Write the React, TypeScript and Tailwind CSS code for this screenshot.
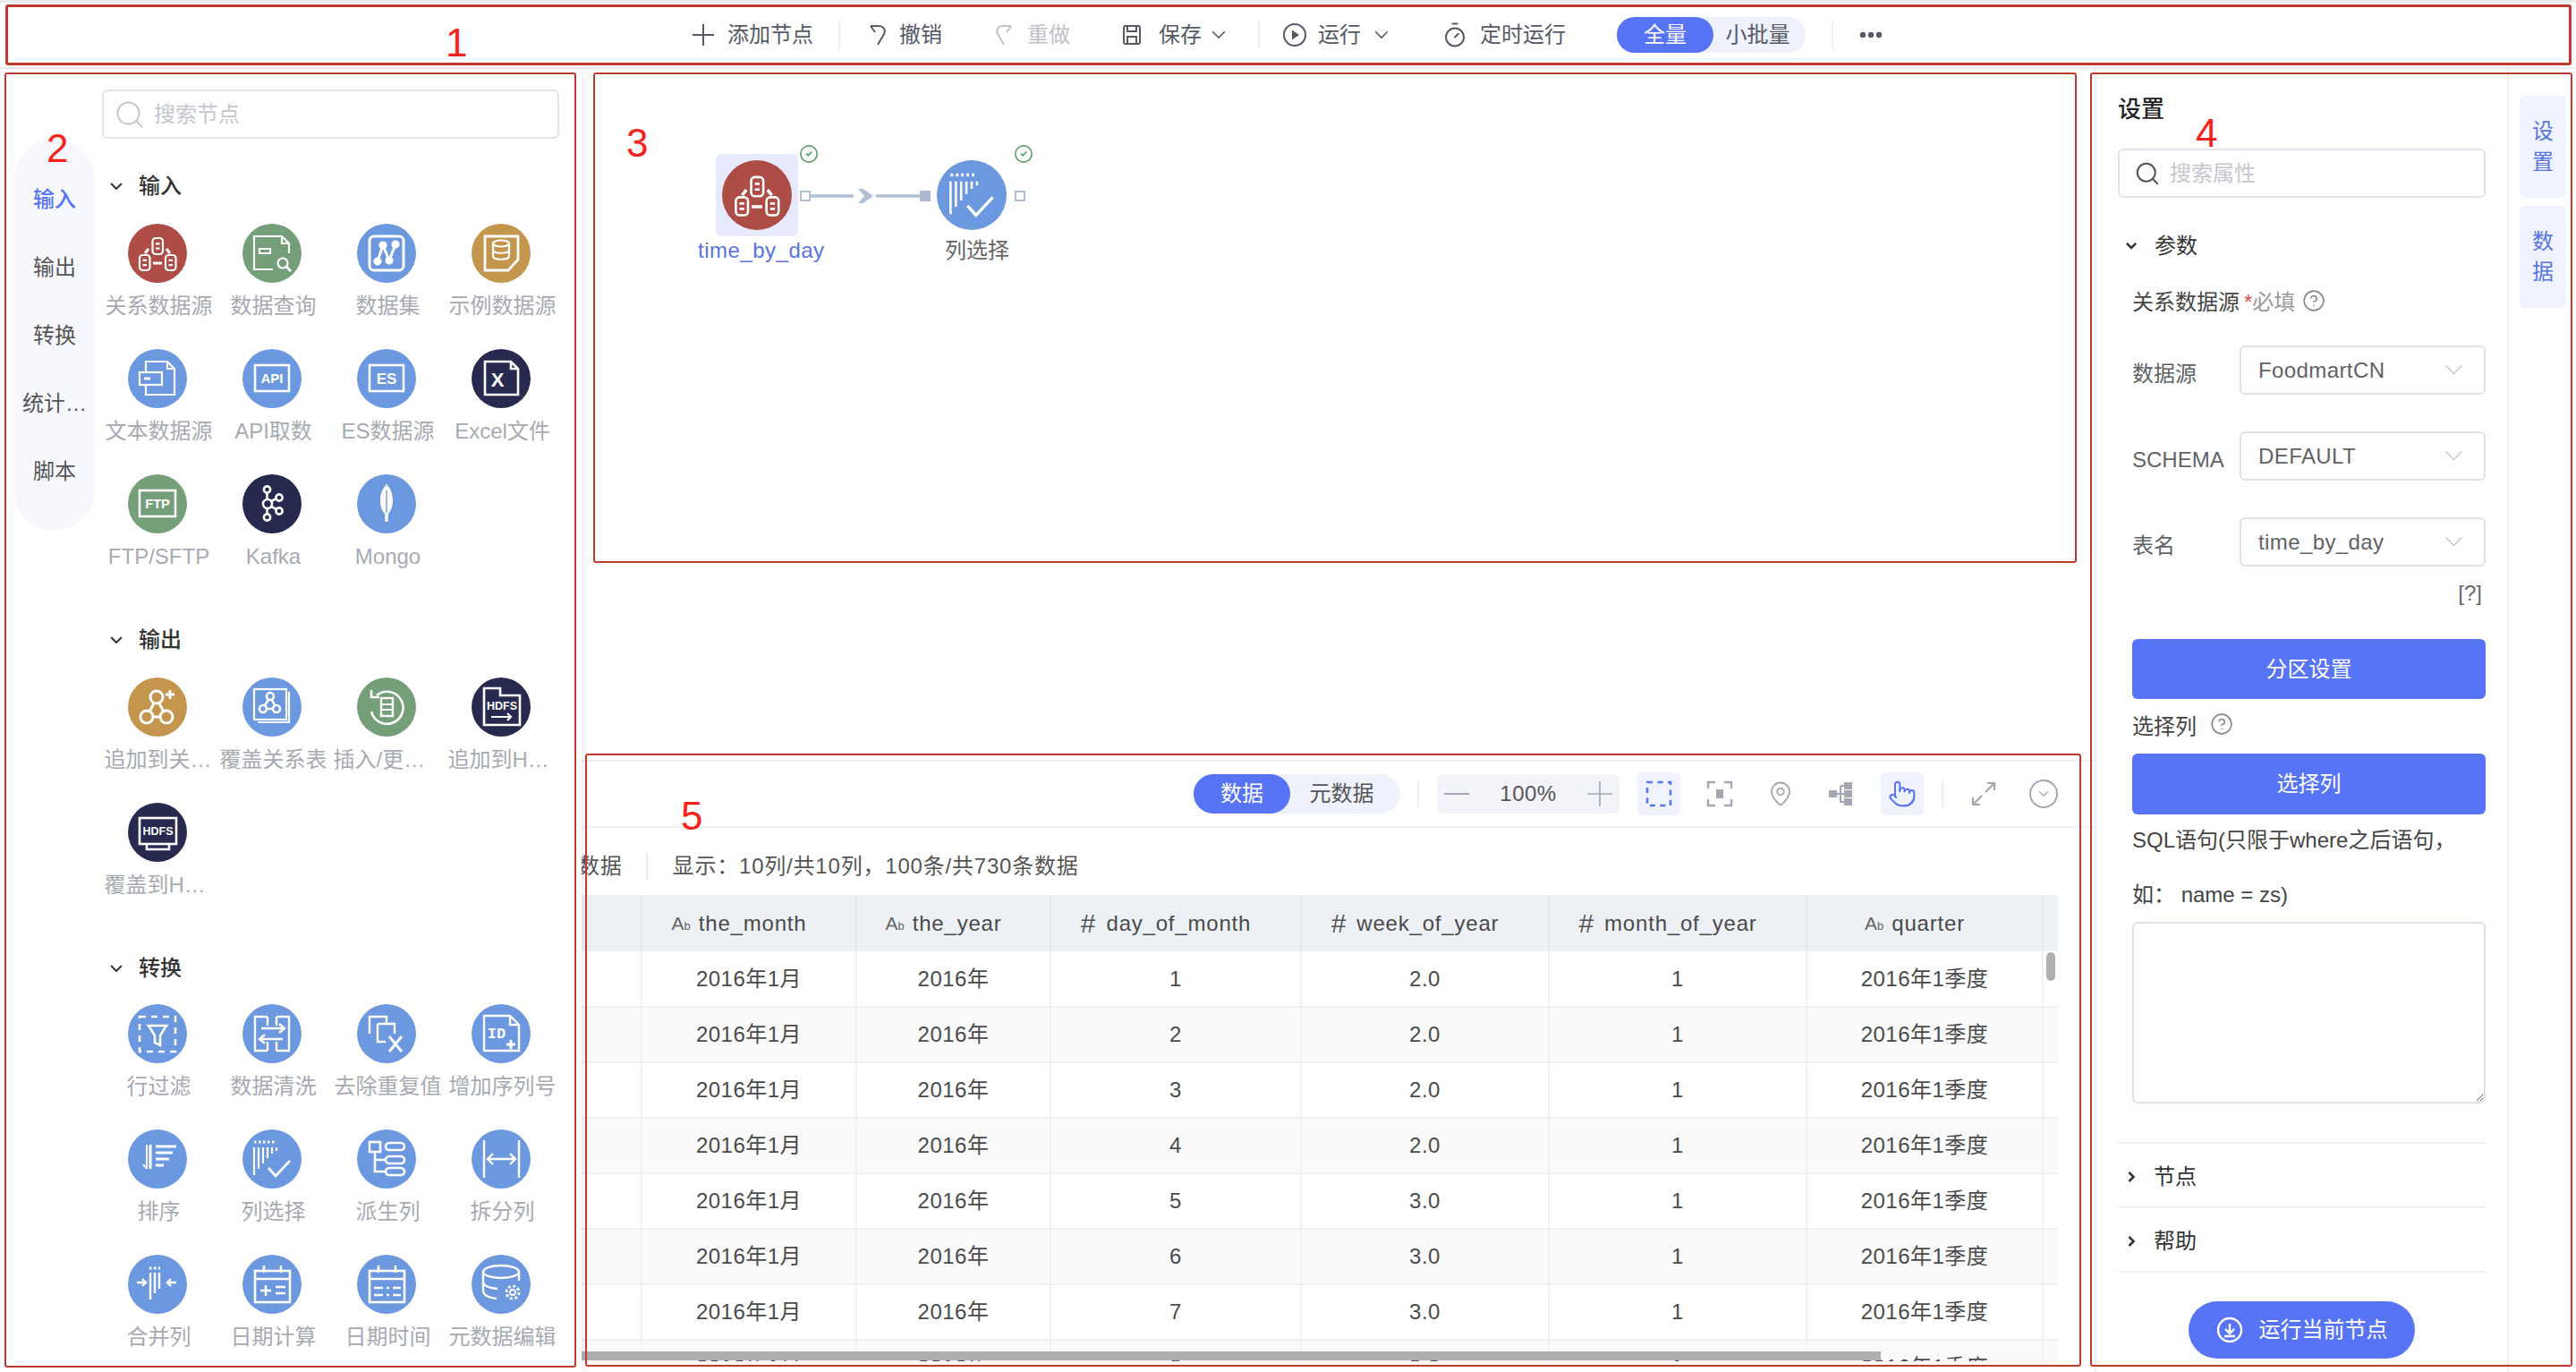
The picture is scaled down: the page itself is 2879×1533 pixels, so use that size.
import React from "react";
import { ChevronDown, Timer, Search, MapPin, Pointer, CircleHelp, CircleCheck } from "lucide-react";

const RED = "#ae4c46";
const GREEN = "#749f78";
const BLUE = "#6b98de";
const GOLD = "#c4954d";
const NAVY = "#27294f";

const Cyl = ({ x, y, w, h }: { x: number; y: number; w: number; h: number }) => (
  <g>
    <rect x={x} y={y} width={w} height={h} rx={3.5} />
    <path d={`M${x + 3.5} ${y + h * 0.35}h${w - 7}M${x + 3.5} ${y + h * 0.65}h${w - 7}`} />
  </g>
);

const Txt = ({ x, y, size, children, font }: { x: number; y: number; size: number; children: string; font?: string }) => (
  <text x={x} y={y} fontSize={size} fontWeight={700} fill="white" stroke="none" textAnchor="middle" fontFamily={font || "Liberation Sans"}>
    {children}
  </text>
);

const glyphs: Record<string, React.ReactNode> = {
  rdb: (
    <>
      <Cyl x={27.5} y={16} w={11.5} h={18} />
      <Cyl x={13} y={35} w={11.5} h={17} />
      <Cyl x={42} y={35} w={11.5} h={17} />
      <path d="M28 44h10M19 33l4-5M47 33l-4-5" strokeWidth={3} />
    </>
  ),
  query: (
    <>
      <path d="M52 33V22l-8-8H13v37h21M44 14v8h8" />
      <path d="M19 28h12v5H19z" />
      <circle cx={45} cy={44} r={5.5} />
      <path d="M49 48l5 5" strokeWidth={3} />
    </>
  ),
  dataset: (
    <>
      <rect x={14} y={14} width={38} height={38} rx={5} strokeWidth={3} />
      <path d="M23 42l6-18 7 17 7-18" strokeWidth={3} />
      <g fill="white">
        <circle cx={23} cy={42} r={3.5} />
        <circle cx={29} cy={24} r={3.5} />
        <circle cx={36} cy={41} r={3.5} />
        <circle cx={43} cy={23} r={3.5} />
      </g>
    </>
  ),
  sample: (
    <>
      <path d="M15 14h37v26L41 52H15z" strokeWidth={2.8} />
      <ellipse cx={33} cy={22} rx={9} ry={3.5} />
      <path d="M24 22v14c0 5 18 5 18 0V22M24 29c0 5 18 5 18 0" />
    </>
  ),
  text: (
    <>
      <path d="M20 25V14h24l8 8v29H20V41M44 14v8h8" />
      <rect x={13} y={26} width={25} height={14} />
      <path d="M18 33h7" strokeWidth={3} />
    </>
  ),
  api: (
    <>
      <rect x={14} y={18} width={38} height={29} strokeWidth={2.6} />
      <Txt x={33} y={38} size={15}>API</Txt>
    </>
  ),
  es: (
    <>
      <rect x={14} y={18} width={38} height={29} strokeWidth={2.6} />
      <Txt x={33} y={39} size={17}>ES</Txt>
    </>
  ),
  excel: (
    <>
      <path d="M15 14h29l8 8v29H15zM44 14v8h8" strokeWidth={2.6} />
      <Txt x={29} y={42} size={22}>X</Txt>
    </>
  ),
  ftp: (
    <>
      <rect x={13} y={18} width={40} height={29} strokeWidth={2.6} />
      <Txt x={33} y={38} size={14.5}>FTP</Txt>
    </>
  ),
  kafka: (
    <g strokeWidth={2.6}>
      <circle cx={27.5} cy={17} r={3.6} />
      <circle cx={28} cy={33} r={5} />
      <circle cx={27.5} cy={48} r={3.6} />
      <circle cx={41} cy={26} r={3.6} />
      <circle cx={41} cy={41} r={3.6} />
      <path d="M27.5 21v7M27.5 38v6M32 30l6-3M32 36l6 3" />
    </g>
  ),
  mongo: (
    <>
      <path d="M33 11C24 20 24 36 31 44l.5 9h3l.5-9C42 36 42 20 33 11z" fill="white" stroke="none" />
      <path d="M33 18v25" stroke={BLUE} strokeWidth={1.4} />
    </>
  ),
  addRel: (
    <g strokeWidth={3}>
      <circle cx={32} cy={22} r={7} />
      <circle cx={21} cy={44} r={7} />
      <circle cx={43} cy={44} r={7} />
      <path d="M29 29l-5 9M35 29l5 9M28 44h8M47 14v10M42 19h10" />
    </g>
  ),
  overwrite: (
    <>
      <rect x={13} y={13} width={36} height={34} />
      <path d="M52 16v34H17" />
      <g strokeWidth={2.6}>
        <circle cx={31} cy={21} r={4} />
        <circle cx={23} cy={35} r={4} />
        <circle cx={38} cy={35} r={4} />
        <path d="M29 25l-4 6M33 25l3 6M27 35h7" />
      </g>
    </>
  ),
  insert: (
    <>
      <path d="M22 20A18 18 0 1 1 16 38" strokeWidth={2.6} />
      <path d="M16 14v8h9" strokeWidth={2.6} />
      <rect x={27} y={23} width={13} height={20} strokeWidth={2.4} />
      <path d="M27 30h13M27 36h13" />
    </>
  ),
  hdfsArrow: (
    <>
      <path d="M14 53V12h18v8h22v33z" strokeWidth={2.6} />
      <Txt x={34} y={36} size={12.5}>HDFS</Txt>
      <path d="M22 44h22M40 40l4 4-4 4" />
    </>
  ),
  hdfsScreen: (
    <>
      <rect x={13} y={17} width={41} height={29} strokeWidth={2.6} />
      <path d="M21 46v6h25v-6" strokeWidth={2.6} />
      <Txt x={33.5} y={36} size={12.5}>HDFS</Txt>
    </>
  ),
  filter: (
    <>
      <rect x={13} y={14} width={40} height={39} strokeWidth={2.6} strokeDasharray="7 6" />
      <path d="M23 24h20l-7 11v11l-6-3v-8z" strokeWidth={2.6} />
    </>
  ),
  clean: (
    <>
      <path d="M28 14H14v38h14M38 14h14v38H38M28 14v10M38 14v10M28 42v10M38 42v10" strokeWidth={2.4} />
      <path d="M21 27h26M41 22l6 5-6 5M45 39H19M25 34l-6 5 6 5" strokeWidth={2.4} />
    </>
  ),
  dedupe: (
    <>
      <path d="M14 33V14h19v8M23 22h19v11M23 22v20h9" strokeWidth={2.4} />
      <path d="M36 36l14 17M50 36L36 53" strokeWidth={3} />
    </>
  ),
  id: (
    <>
      <path d="M14 13h29l10 10v29H14zM43 13v10h10" strokeWidth={2.4} />
      <Txt x={28} y={38} size={17} font="Liberation Mono">ID</Txt>
      <path d="M44 40v10M39 45h10" strokeWidth={3} />
    </>
  ),
  sort: (
    <g strokeWidth={3}>
      <path d="M25 17v27M31 19h23M31 26h19M31 33h15M31 40h9" />
      <path d="M21 17v27M21 44l-4-5" strokeWidth={2} />
    </g>
  ),
  columns: (
    <>
      <path d="M13 14h25" strokeDasharray="2.5 2.5" strokeWidth={3} />
      <path d="M13 20v31M18 20v24M23 20v18M28 20v12M33 20v7M38 20v4" strokeWidth={2.2} />
      <path d="M29 43l8 9 16-17" strokeWidth={2.8} />
    </>
  ),
  derive: (
    <>
      <rect x={14} y={14} width={12} height={11} strokeWidth={2.6} />
      <rect x={32} y={15} width={21} height={8} rx={4} strokeWidth={2.6} />
      <rect x={32} y={30} width={21} height={8} rx={4} strokeWidth={2.6} />
      <rect x={32} y={43} width={21} height={8} rx={4} strokeWidth={2.6} />
      <path d="M20 25v22h12M20 34h12" strokeWidth={2.6} />
    </>
  ),
  split: <path d="M14 12v42M53 12v42M19 33h29M24 27l-6 6 6 6M43 27l6 6-6 6" strokeWidth={2.4} />,
  merge: (
    <>
      <path d="M25 20v30M30 20v23M35 20v18" strokeWidth={2.4} />
      <path d="M24 15h12" strokeDasharray="2.5 2.5" strokeWidth={3} />
      <path d="M10 31h10M16 27l4 4-4 4" strokeWidth={2.4} />
      <path d="M54 31H44M48 27l-4 4 4 4" strokeWidth={2.4} />
    </>
  ),
  dateCalc: (
    <g strokeWidth={2.6}>
      <rect x={14} y={18} width={39} height={35} />
      <path d="M14 27h39M24 12v8M43 12v8M20 40h12M26 34v12M37 36h11M37 43h11" />
    </g>
  ),
  dateTime: (
    <g strokeWidth={2.6}>
      <rect x={14} y={18} width={39} height={35} />
      <path d="M14 27h39M24 12v8M43 12v8M19 37h10M33 37h3M40 37h9M19 45h10M33 45h3M40 45h9" />
    </g>
  ),
  meta: (
    <g strokeWidth={2.4}>
      <ellipse cx={33} cy={19} rx={20} ry={7} />
      <path d="M13 19v11c0 4 6 7 16 8M53 19v10M13 30v10c0 5 7 8 15 9" />
      <circle cx={46} cy={42} r={3} strokeWidth={1.8} />
      <circle cx={46} cy={42} r={7} strokeWidth={3} strokeDasharray="3 2.5" />
    </g>
  ),
};

const NodeIcon = ({ color, glyph, size = 66 }: { color: string; glyph: string; size?: number }) => (
  <svg width={size} height={size} viewBox="0 0 66 66" className="shrink-0">
    <circle cx={33} cy={33} r={33} fill={color} />
    <g fill="none" stroke="white" strokeWidth={2.2}>
      {glyphs[glyph]}
    </g>
  </svg>
);

// the chevrons in the reference are wide and shallow, lucide's are too small at these box sizes
const Chev = ({ w = 16, width = 1.6, className }: { w?: number; width?: number; className?: string }) => (
  <svg width={w} height={w * 0.6} viewBox="0 0 20 12" fill="none" stroke="currentColor" strokeWidth={(width * 20) / w} className={className}>
    <path d="M1.5 1.5L10 10l8.5-8.5" />
  </svg>
);

const ChevRight = ({ className }: { className?: string }) => (
  <svg width="9" height="14" viewBox="0 0 9 14" fill="none" stroke="currentColor" strokeWidth="2.6" className={className}>
    <path d="M1.5 2l5 5-5 5" />
  </svg>
);

const PlusLine = ({ size, color, width }: { size: number; color: string; width: number }) => (
  <svg width={size} height={size} viewBox={`0 0 ${size} ${size}`} stroke={color} strokeWidth={width} className="shrink-0">
    <path d={`M0 ${size / 2}h${size}M${size / 2} 0v${size}`} />
  </svg>
);

const MinusLine = ({ size, color, width }: { size: number; color: string; width: number }) => (
  <svg width={size} height={size} viewBox={`0 0 ${size} ${size}`} stroke={color} strokeWidth={width} className="shrink-0">
    <path d={`M0 ${size / 2}h${size}`} />
  </svg>
);

const sections = [
  {
    title: "输入",
    nodes: [
      ["关系数据源", RED, "rdb"],
      ["数据查询", GREEN, "query"],
      ["数据集", BLUE, "dataset"],
      ["示例数据源", GOLD, "sample"],
      ["文本数据源", BLUE, "text"],
      ["API取数", BLUE, "api"],
      ["ES数据源", BLUE, "es"],
      ["Excel文件", NAVY, "excel"],
      ["FTP/SFTP", GREEN, "ftp"],
      ["Kafka", NAVY, "kafka"],
      ["Mongo", BLUE, "mongo"],
    ],
  },
  {
    title: "输出",
    nodes: [
      ["追加到关系表", GOLD, "addRel"],
      ["覆盖关系表", BLUE, "overwrite"],
      ["插入/更新关系表", GREEN, "insert"],
      ["追加到HDFS", NAVY, "hdfsArrow"],
      ["覆盖到HDFS", NAVY, "hdfsScreen"],
    ],
  },
  {
    title: "转换",
    nodes: [
      ["行过滤", BLUE, "filter"],
      ["数据清洗", BLUE, "clean"],
      ["去除重复值", BLUE, "dedupe"],
      ["增加序列号", BLUE, "id"],
      ["排序", BLUE, "sort"],
      ["列选择", BLUE, "columns"],
      ["派生列", BLUE, "derive"],
      ["拆分列", BLUE, "split"],
      ["合并列", BLUE, "merge"],
      ["日期计算", BLUE, "dateCalc"],
      ["日期时间", BLUE, "dateTime"],
      ["元数据编辑", BLUE, "meta"],
    ],
  },
];

const Divider = ({ className }: { className: string }) => <div className={`h-[32px] w-[2px] shrink-0 bg-[#eceef2] ${className}`} />;

const TopBar = () => (
  <div className="flex h-[77px] shrink-0 items-center border-t-[3px] border-b-2 border-t-[#ececf0] border-b-[#eeeff3] bg-white pl-[774px] text-[24px] text-[#555a66]">
    <PlusLine size={24} color="#555a66" width={2} />
    <span className="ml-[15px]">添加节点</span>
    <Divider className="ml-[28px]" />
    <svg width="22" height="26" viewBox="0 0 22 26" fill="none" stroke="#555a66" strokeWidth="2" className="ml-[31px]">
      <path d="M3 3l5 7M3 3h9c6 0 8 5 6 9l-7 12" />
    </svg>
    <span className="ml-[13px]">撤销</span>
    <svg width="22" height="26" viewBox="0 0 22 26" fill="none" stroke="#bfc2c9" strokeWidth="2" className="ml-[58px]">
      <path d="M19 3l-5 7M19 3h-9C4 3 2 8 4 12l7 12" />
    </svg>
    <span className="ml-[15px] text-[#bfc2c9]">重做</span>
    <svg width="24" height="24" viewBox="0 0 24 24" fill="none" stroke="#555a66" strokeWidth="2" className="ml-[57px]">
      <rect x="3" y="2" width="18" height="20" rx="2" />
      <path d="M7 2v6h10V2M7 22v-8h10v8" />
    </svg>
    <span className="ml-[18px]">保存</span>
    <Chev className="ml-[11px]" />
    <Divider className="ml-[36px]" />
    <svg width="28" height="28" viewBox="0 0 28 28" fill="none" stroke="#555a66" strokeWidth="2" className="ml-[25px]">
      <circle cx="14" cy="14" r="12" />
      <path d="M11 8.5l8 5.5-8 5.5z" fill="#555a66" stroke="none" />
    </svg>
    <span className="ml-[12px]">运行</span>
    <Chev className="ml-[15px]" />
    <Timer size={30} strokeWidth={1.6} className="ml-[59px]" />
    <span className="ml-[13px]">定时运行</span>
    <div className="ml-[57px] flex h-[40px] w-[211px] shrink-0 items-center rounded-full bg-[#eff2fc]">
      <span className="flex h-full w-[108px] items-center justify-center rounded-full bg-[#5874f6] text-white">全量</span>
      <span className="flex-1 pr-1 text-center">小批量</span>
    </div>
    <Divider className="ml-[29px]" />
    <svg width="26" height="8" viewBox="0 0 26 8" fill="#555a66" className="ml-[29px]">
      <circle cx="4" cy="4" r="3.2" />
      <circle cx="13" cy="4" r="3.2" />
      <circle cx="22" cy="4" r="3.2" />
    </svg>
  </div>
);

const LeftPanel = () => (
  <div className="z-10 flex w-[650px] shrink-0 overflow-hidden bg-white shadow-[3px_0_10px_rgba(30,40,80,0.08)]">
    <div className="ml-[16px] mt-[79px] h-[437px] w-[90px] shrink-0 rounded-full bg-[#f7f8fd] pt-[29px] text-center text-[24px] text-[#555]">
      {["输入", "输出", "转换", "统计分析", "脚本"].map((t, i) => (
        <div key={t} className={`mx-auto flex h-[76px] w-[72px] items-center justify-center ${i === 0 ? "font-medium text-[#5874f6]" : ""}`}>
          <span className="truncate">{t}</span>
        </div>
      ))}
    </div>
    <div className="ml-[8px] w-[511px] shrink-0 pt-[23px]">
      <div className="flex h-[55px] items-center rounded-md border-2 border-[#e1e3ea] pl-[11px]">
        <Search size={36} strokeWidth={1.3} className="text-[#c4c7cf]" />
        <input placeholder="搜索节点" className="ml-[9px] w-[300px] text-[24px] outline-none placeholder:text-[#c4c7cf]" />
      </div>
      <div className="mt-[31px]">
        {sections.map((s) => (
          <div key={s.title} className="mb-[23px]">
            <div className="flex h-[44px] items-center pl-[9px] text-[24px] font-medium text-[#333]">
              <Chev w={14} width={2} />
              <span className="ml-[18px]">{s.title}</span>
            </div>
            <div className={`-ml-[2px] grid auto-rows-[140px] grid-cols-[repeat(4,128px)] ${s.title === "转换" ? "mt-[18px]" : "mt-[20px]"}`}>
              {s.nodes.map(([label, color, glyph]) => (
                <div key={label} className="flex flex-col items-center">
                  <NodeIcon color={color} glyph={glyph} />
                  <div className="ml-[3px] mt-[10px] w-[122px] truncate text-center text-[24px] leading-[32px] text-[#a7aab2]">{label}</div>
                </div>
              ))}
            </div>
          </div>
        ))}
      </div>
    </div>
  </div>
);

const Port = ({ className }: { className: string }) => (
  <div className={`absolute top-[136px] size-[12px] border-2 border-[#b3bfd4] bg-white ${className}`} />
);

const Canvas = () => (
  <div className="relative flex-1 bg-white">
    <div className="absolute left-[150px] top-[95px] size-[92px] rounded-md bg-[#e6eafc]" />
    <div className="absolute left-[157px] top-[102px]">
      <NodeIcon color={RED} glyph="rdb" size={78} />
    </div>
    <div className="absolute left-[397px] top-[102px]">
      <NodeIcon color={BLUE} glyph="columns" size={78} />
    </div>
    <CircleCheck size={22} strokeWidth={1.8} className="absolute left-[243px] top-[84px] text-[#5a9c6e]" />
    <CircleCheck size={22} strokeWidth={1.8} className="absolute left-[483px] top-[84px] text-[#5a9c6e]" />
    <Port className="left-[244px]" />
    <Port className="left-[484px]" />
    <svg width="140" height="20" viewBox="0 0 140 20" fill="none" className="absolute left-[255px] top-[132px]">
      <path d="M0 10h49M74 10h49" stroke="#b3bfd4" strokeWidth="3.5" />
      <path d="M54 2h6l11 8-11 8h-6l7-8z" fill="#b3bfd4" />
      <rect x="123" y="4" width="12" height="12" fill="#aeb9d0" />
    </svg>
    <div className="absolute left-[130px] top-[187px] w-[132px] whitespace-nowrap text-center text-[24px] leading-[32px] tracking-[0.5px] text-[#5874e0]">time_by_day</div>
    <div className="absolute left-[382px] top-[187px] w-[120px] text-center text-[24px] leading-[32px] text-[#666]">列选择</div>
  </div>
);

const AbMark = () => (
  <span className="mr-[9px] text-[21px] tracking-normal text-[#666]">
    A<span className="text-[13px]">b</span>
  </span>
);
const HashMark = () => <span className="mr-[12px] text-[30px] leading-none tracking-normal text-[#555]">#</span>;

const columns = [
  { name: "the_day", kind: "ab", w: "w-[240px]", value: () => "星期五" },
  { name: "the_month", kind: "ab", w: "w-[240px]", value: () => "2016年1月" },
  { name: "the_year", kind: "ab", w: "w-[217px]", value: () => "2016年" },
  { name: "day_of_month", kind: "num", w: "w-[280px]", value: (i: number) => String(i + 1) },
  { name: "week_of_year", kind: "num", w: "w-[277px]", value: (i: number) => (i < 4 ? "2.0" : "3.0") },
  { name: "month_of_year", kind: "num", w: "w-[288px]", value: () => "1" },
  { name: "quarter", kind: "ab", w: "w-[264px]", value: () => "2016年1季度" },
  { name: "", kind: "", w: "w-[200px]", value: () => "" },
];

const PreviewTable = () => (
  <div className="relative h-[521px] w-[1650px] overflow-hidden">
    <table className="-ml-[173px] w-[2006px] table-fixed border-collapse text-[24px] tracking-[0.5px] text-[#4a4a4a]">
      <colgroup>
        {columns.map((c) => (
          <col key={c.name} className={c.w} />
        ))}
      </colgroup>
      <thead>
        <tr className="h-[63px] bg-[#edf0f5]">
          {columns.map((c) => (
            <th key={c.name} className={`font-normal tracking-[0.8px] ${c.name ? "border-r-2 border-r-[#e4e6eb]" : ""}`}>
              <div className="flex items-center justify-center pr-[22px]">
                {c.kind === "ab" && <AbMark />}
                {c.kind === "num" && <HashMark />}
                {c.name}
              </div>
            </th>
          ))}
        </tr>
      </thead>
      <tbody>
        {Array.from({ length: 8 }).map((_, r) => (
          <tr key={r} className={`h-[62px] border-b-2 border-b-[#eeeff3] ${r % 2 === 1 ? "bg-[#fafafa]" : "bg-white"}`}>
            {columns.map((c) => (
              <td key={c.name} className={`text-center ${c.name ? "border-r-2 border-r-[#f0f1f4]" : ""}`}>
                {c.value(r)}
              </td>
            ))}
          </tr>
        ))}
      </tbody>
    </table>
    <div className="absolute right-[3px] top-[64px] h-[32px] w-[10px] rounded-full bg-[#b0b0b0]" />
    <div className="absolute bottom-[1px] left-0 h-[10px] w-[1452px] bg-[#aeaeae]" />
  </div>
);

const ToolBtn = ({ active, className, children }: { active?: boolean; className: string; children: React.ReactNode }) => (
  <div className={`flex h-[48px] w-[48px] shrink-0 items-center justify-center rounded-md ${active ? "bg-[#f0f3fd]" : ""} ${className}`}>{children}</div>
);

const Preview = () => (
  <div className="flex h-[684px] shrink-0 flex-col border-t-2 border-t-[#eeeff3] bg-white">
    <div className="flex h-[74px] shrink-0 items-center border-b-2 border-b-[#eeeff3] pl-[684px] text-[24px]">
      <div className="flex h-[44px] w-[231px] shrink-0 items-center rounded-full bg-[#eff2fc] text-[#555]">
        <span className="flex h-full w-[108px] items-center justify-center rounded-full bg-[#5874f6] text-white">数据</span>
        <span className="flex-1 pr-2 text-center">元数据</span>
      </div>
      <Divider className="ml-[19px]" />
      <div className="ml-[20px] flex h-[44px] w-[204px] shrink-0 items-center rounded-md bg-[#f3f4f9] px-[8px] tracking-[0.5px] text-[#555]">
        <MinusLine size={28} color="#a3a7b3" width={2} />
        <span className="flex-1 text-center">100%</span>
        <PlusLine size={28} color="#a3a7b3" width={1.6} />
      </div>
      <ToolBtn active className="ml-[20px]">
        <svg width="30" height="30" viewBox="0 0 30 30" fill="none" stroke="#5874f6" strokeWidth="2.6">
          <rect x="2" y="2" width="26" height="26" strokeDasharray="6 5.5" />
        </svg>
      </ToolBtn>
      <ToolBtn className="ml-[20px]">
        <svg width="30" height="30" viewBox="0 0 30 30" fill="none" stroke="#a3a7b3" strokeWidth="2.4">
          <path d="M2 9V2h8M20 2h8v7M28 21v7h-8M10 28H2v-7" />
          <rect x="11" y="10" width="8" height="10" fill="#a3a7b3" stroke="none" />
        </svg>
      </ToolBtn>
      <MapPin size={30} strokeWidth={1.5} className="ml-[29px] shrink-0 text-[#a3a7b3]" />
      <svg width="26" height="28" viewBox="0 0 26 28" fill="none" stroke="#a3a7b3" strokeWidth="2" className="ml-[39px] shrink-0">
        <rect x="1" y="11" width="7" height="6" fill="#a3a7b3" />
        <rect x="18" y="2" width="7" height="6" fill="#a3a7b3" />
        <rect x="18" y="11" width="7" height="6" fill="#a3a7b3" />
        <rect x="18" y="20" width="7" height="6" fill="#a3a7b3" />
        <path d="M8 14h10M13 5v18h5M13 5h5" />
      </svg>
      <ToolBtn active className="ml-[32px]">
        <Pointer size={32} strokeWidth={1.5} className="text-[#5874f6]" />
      </ToolBtn>
      <Divider className="ml-[20px]" />
      <svg width="28" height="28" viewBox="0 0 28 28" fill="none" stroke="#a3a7b3" strokeWidth="2.2" className="ml-[31px] shrink-0">
        <path d="M16 12L26 2M18 2h8v8M12 16L2 26M10 26H2v-8" />
      </svg>
      <div className="ml-[37px] flex size-[32px] shrink-0 items-center justify-center rounded-full border-2 border-[#a3a7b3]">
        <ChevronDown size={18} strokeWidth={1.6} className="text-[#a3a7b3]" />
      </div>
    </div>
    <div className="flex h-[75px] shrink-0 items-center pt-[10px] text-[24px] tracking-[0.8px] text-[#555]">
      <span className="-ml-[4px]">数据</span>
      <Divider className="ml-[26px]" />
      <span className="ml-[28px]">显示：10列/共10列，100条/共730条数据</span>
    </div>
    <PreviewTable />
  </div>
);

const SelectBox = ({ label, value }: { label: string; value: string }) => (
  <div className="flex items-center">
    <div className="w-[120px] shrink-0 pt-2 text-[24px] text-[#606266]">{label}</div>
    <div className="flex h-[55px] flex-1 items-center justify-between rounded-md border-2 border-[#dfe1e8] pl-[19px] pr-[23px] text-[24px] tracking-[0.4px] text-[#606266]">
      {value}
      <Chev w={21} width={1.4} className="text-[#c0c4cc]" />
    </div>
  </div>
);

const FoldRow = ({ label }: { label: string }) => (
  <div className="flex h-[72px] items-center border-b-2 border-b-[#f0f1f4] pl-[11px] pt-[3px] text-[24px] text-[#333]">
    <ChevRight />
    <span className="ml-[20px]">{label}</span>
  </div>
);

const RightPanel = () => (
  <div className="z-10 flex w-[538px] shrink-0 bg-white">
    <div className="w-[463px] shrink-0 border-x-2 border-x-[#eeeff3] pl-[24px] pr-[24px] pt-[28px]">
      <div className="h-[34px] text-[26px] font-medium leading-[34px] text-[#222]">设置</div>
      <div className="mt-[27px] flex h-[55px] items-center rounded-md border-2 border-[#e1e3ea] pl-[16px]">
        <Search size={30} strokeWidth={1.6} className="text-[#555]" />
        <input placeholder="搜索属性" className="ml-[10px] w-[300px] text-[24px] outline-none placeholder:text-[#c4c7cf]" />
      </div>
      <div className="mt-[37px] flex h-[34px] items-center pl-[9px] text-[24px] text-[#333]">
        <Chev w={12} width={2.6} />
        <span className="ml-[20px]">参数</span>
      </div>
      <div className="pl-[16px]">
        <div className="mt-[29px] flex h-[34px] items-center text-[24px] text-[#444]">
          关系数据源
          <span className="ml-[5px] text-[#d9534f]">*</span>
          <span className="text-[#999]">必填</span>
          <CircleHelp size={26} strokeWidth={1.5} className="ml-[8px] -translate-y-[2px] text-[#888]" />
        </div>
        <div className="mt-[31px] flex flex-col gap-[41px]">
          <SelectBox label="数据源" value="FoodmartCN" />
          <SelectBox label="SCHEMA" value="DEFAULT" />
          <SelectBox label="表名" value="time_by_day" />
        </div>
        <div className="mt-[15px] h-[30px] pr-[4px] text-right text-[24px] leading-[30px] text-[#666]">[?]</div>
        <button className="mt-[36px] h-[67px] w-full rounded-md bg-[#5874f6] text-[24px] text-white">分区设置</button>
        <div className="mt-[14px] flex h-[34px] items-center text-[24px] text-[#444]">
          选择列
          <CircleHelp size={26} strokeWidth={1.5} className="ml-[15px] -translate-y-[3px] text-[#888]" />
        </div>
        <button className="mt-[13px] h-[68px] w-full rounded-md bg-[#5874f6] text-[24px] text-white">选择列</button>
        <div className="mt-[12px] h-[34px] whitespace-nowrap text-[24px] leading-[34px] text-[#444]">SQL语句(只限于where之后语句，</div>
        <div className="mt-[27px] h-[34px] whitespace-nowrap text-[24px] leading-[34px] text-[#444]">如： name = zs)</div>
        <textarea className="mt-[13px] block h-[203px] w-full resize-y rounded-md border-2 border-[#dfe1e8]" />
      </div>
      <div className="mt-[43px] border-t-2 border-t-[#f0f1f4]">
        <FoldRow label="节点" />
        <FoldRow label="帮助" />
      </div>
      <div className="mt-[32px] flex justify-center">
        <button className="flex h-[64px] w-[253px] items-center justify-center gap-[18px] rounded-full bg-[#5874f6] text-[24px] text-white">
          <svg width="30" height="30" viewBox="0 0 30 30" fill="none" stroke="white" strokeWidth="2.4">
            <circle cx="15" cy="15" r="13" />
            <path d="M15 8v10M10 14l5 5 5-5M9 22h12" />
          </svg>
          运行当前节点
        </button>
      </div>
    </div>
    <div className="flex flex-1 flex-col gap-[9px] pl-[12px] pt-[30px]">
      {[["设", "置"], ["数", "据"]].map(([a, b]) => (
        <div key={a} className="flex h-[114px] w-[52px] flex-col items-center justify-center gap-[2px] rounded-md bg-[#f0f3fd] text-[24px] leading-[32px] text-[#5874e0]">
          <span>{a}</span>
          <span>{b}</span>
        </div>
      ))}
    </div>
  </div>
);

// red review marks drawn on top of the screenshot
const marks = [
  "left-[6px] top-[5px] h-[68px] w-[2868px] border-[3px]",
  "left-[5px] top-[81px] h-[1447px] w-[639px] border-2",
  "left-[663px] top-[81px] h-[548px] w-[1658px] border-2",
  "left-[2336px] top-[81px] h-[1446px] w-[539px] border-2",
  "left-[654px] top-[842px] h-[685px] w-[1672px] border-[2px]",
];
const digits = [
  ["1", "left-[498px] top-[23px]"],
  ["2", "left-[52px] top-[141px]"],
  ["3", "left-[700px] top-[135px]"],
  ["4", "left-[2454px] top-[124px]"],
  ["5", "left-[761px] top-[887px]"],
];

export default function App() {
  return (
    <div className="relative flex h-[1533px] w-[2879px] flex-col overflow-hidden bg-white font-['Liberation_Sans','Noto_Sans_CJK_SC',sans-serif]">
      <TopBar />
      <div className="flex min-h-0 flex-1">
        <LeftPanel />
        <div className="flex min-w-0 flex-1 flex-col overflow-hidden">
          <Canvas />
          <Preview />
        </div>
        <RightPanel />
      </div>
      {marks.map((m) => (
        <div key={m} className={`pointer-events-none absolute z-20 rounded-[3px] border-[#c0392f] ${m}`} />
      ))}
      {digits.map(([d, pos]) => (
        <div key={d} className={`absolute z-20 text-[44px] leading-[50px] text-[#f5231b] ${pos}`}>
          {d}
        </div>
      ))}
    </div>
  );
}
